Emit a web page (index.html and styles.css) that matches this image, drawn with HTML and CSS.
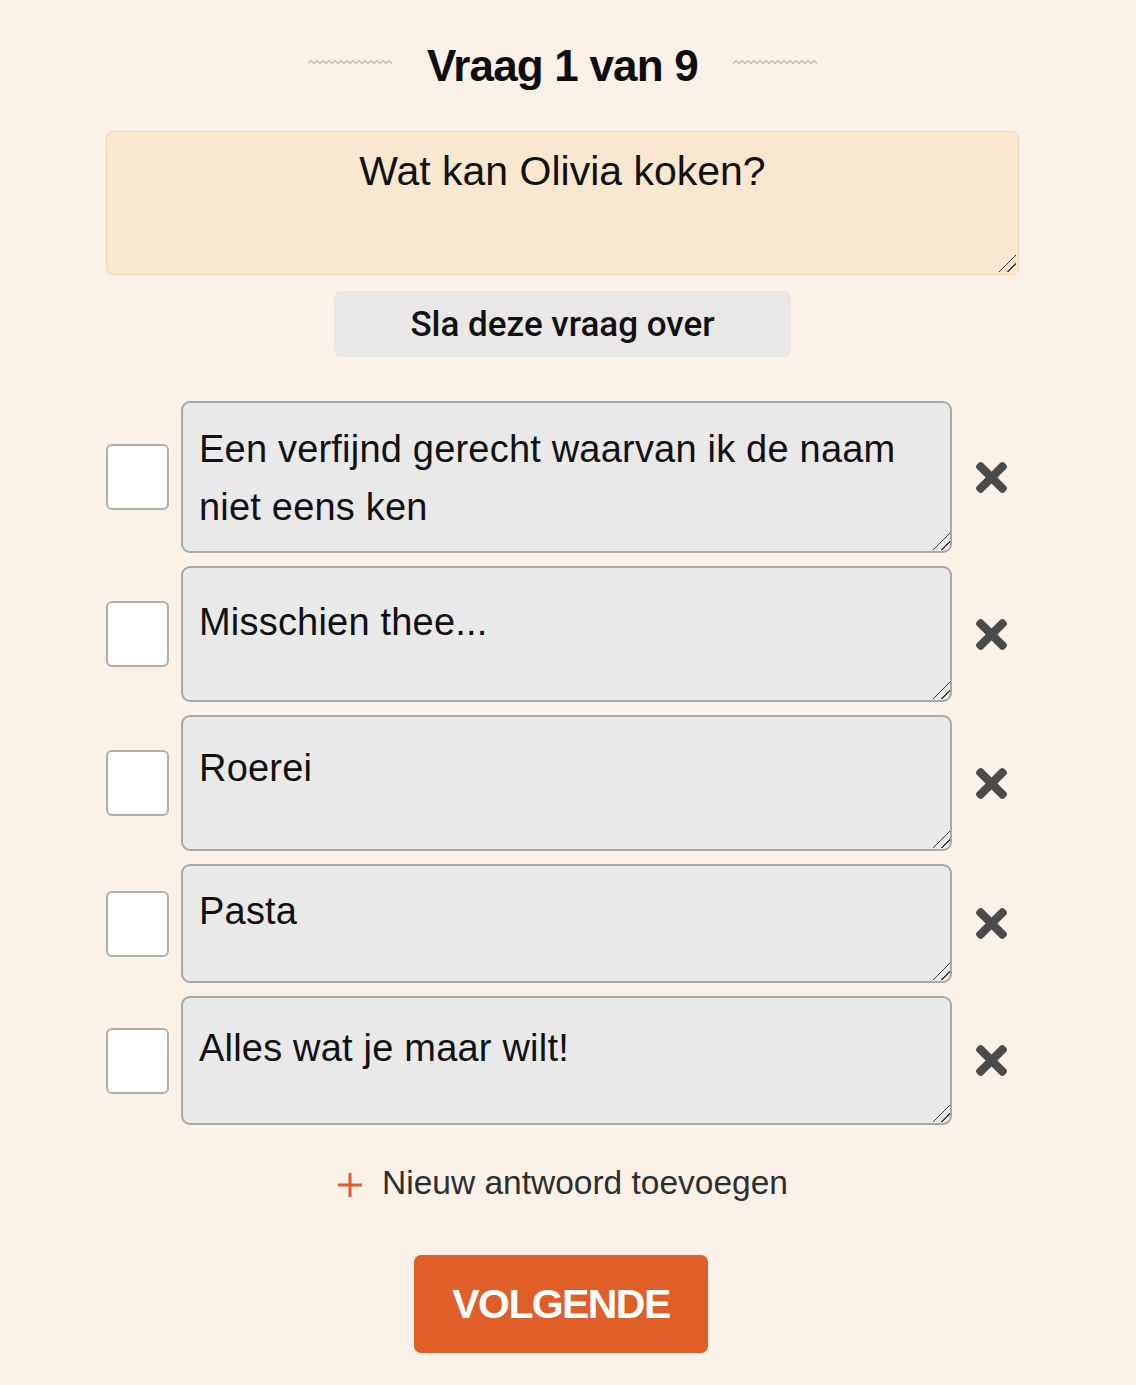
FILE: index.html
```html
<!DOCTYPE html>
<html lang="nl">
<head>
<meta charset="utf-8">
<title>Vraag 1 van 9</title>
<link rel="stylesheet" href="styles.css">
</head>
<body>
<main class="quiz">
  <header class="quiz-head">
    <svg class="wave" width="84" height="6" viewBox="0 0 84 6"><polyline points="0,4.5 3,1.5 6,4.5 9,1.5 12,4.5 15,1.5 18,4.5 21,1.5 24,4.5 27,1.5 30,4.5 33,1.5 36,4.5 39,1.5 42,4.5 45,1.5 48,4.5 51,1.5 54,4.5 57,1.5 60,4.5 63,1.5 66,4.5 69,1.5 72,4.5 75,1.5 78,4.5 81,1.5 84,4.5" /></svg>
    <h1 class="quiz-title">Vraag 1 van 9</h1>
    <svg class="wave" width="84" height="6" viewBox="0 0 84 6"><polyline points="0,4.5 3,1.5 6,4.5 9,1.5 12,4.5 15,1.5 18,4.5 21,1.5 24,4.5 27,1.5 30,4.5 33,1.5 36,4.5 39,1.5 42,4.5 45,1.5 48,4.5 51,1.5 54,4.5 57,1.5 60,4.5 63,1.5 66,4.5 69,1.5 72,4.5 75,1.5 78,4.5 81,1.5 84,4.5" /></svg>
  </header>

  <div class="field question-field">
    <textarea class="question">Wat kan Olivia koken?</textarea>
  </div>

  <div class="skip-wrap">
    <button class="skip">Sla deze vraag over</button>
  </div>

  <div class="answers">
    <div class="answer">
      <input type="checkbox" class="check">
      <div class="field"><textarea class="answer-text r1">Een verfijnd gerecht waarvan ik de naam niet eens ken</textarea></div>
      <button class="remove" aria-label="Verwijderen"><svg viewBox="0 80 352 352" width="31" height="31"><path d="M242.72 256l100.07-100.07c12.28-12.28 12.28-32.190 0-44.48l-22.24-22.24c-12.28-12.28-32.19-12.28-44.48 0L176 189.28 75.93 89.21c-12.28-12.28-32.19-12.28-44.48 0L9.21 111.45c-12.28 12.28-12.28 32.19 0 44.48L109.28 256 9.21 356.07c-12.28 12.28-12.28 32.19 0 44.48l22.24 22.24c12.28 12.28 32.2 12.28 44.48 0L176 322.72l100.07 100.07c12.28 12.28 32.2 12.28 44.48 0l22.24-22.24c12.28-12.28 12.28-32.19 0-44.48L242.72 256z"/></svg></button>
    </div>
    <div class="answer">
      <input type="checkbox" class="check">
      <div class="field"><textarea class="answer-text r2">Misschien thee...</textarea></div>
      <button class="remove" aria-label="Verwijderen"><svg viewBox="0 80 352 352" width="31" height="31"><path d="M242.72 256l100.07-100.07c12.28-12.28 12.28-32.190 0-44.48l-22.24-22.24c-12.28-12.28-32.19-12.28-44.48 0L176 189.28 75.93 89.21c-12.28-12.28-32.19-12.28-44.48 0L9.21 111.45c-12.28 12.28-12.28 32.19 0 44.48L109.28 256 9.21 356.07c-12.28 12.28-12.28 32.19 0 44.48l22.24 22.24c12.28 12.28 32.2 12.28 44.48 0L176 322.72l100.07 100.07c12.28 12.28 32.2 12.28 44.48 0l22.24-22.24c12.28-12.28 12.28-32.19 0-44.48L242.72 256z"/></svg></button>
    </div>
    <div class="answer">
      <input type="checkbox" class="check">
      <div class="field"><textarea class="answer-text r3">Roerei</textarea></div>
      <button class="remove" aria-label="Verwijderen"><svg viewBox="0 80 352 352" width="31" height="31"><path d="M242.72 256l100.07-100.07c12.28-12.28 12.28-32.190 0-44.48l-22.24-22.24c-12.28-12.28-32.19-12.28-44.48 0L176 189.28 75.93 89.21c-12.28-12.28-32.19-12.28-44.48 0L9.21 111.45c-12.28 12.28-12.28 32.19 0 44.48L109.28 256 9.21 356.07c-12.28 12.28-12.28 32.19 0 44.48l22.24 22.24c12.28 12.28 32.2 12.28 44.48 0L176 322.72l100.07 100.07c12.28 12.28 32.2 12.28 44.48 0l22.24-22.24c12.28-12.28 12.28-32.19 0-44.48L242.72 256z"/></svg></button>
    </div>
    <div class="answer">
      <input type="checkbox" class="check">
      <div class="field"><textarea class="answer-text r4">Pasta</textarea></div>
      <button class="remove" aria-label="Verwijderen"><svg viewBox="0 80 352 352" width="31" height="31"><path d="M242.72 256l100.07-100.07c12.28-12.28 12.28-32.190 0-44.48l-22.24-22.24c-12.28-12.28-32.19-12.28-44.48 0L176 189.28 75.93 89.21c-12.28-12.28-32.19-12.28-44.48 0L9.21 111.45c-12.28 12.28-12.28 32.19 0 44.48L109.28 256 9.21 356.07c-12.28 12.28-12.28 32.19 0 44.48l22.24 22.24c12.28 12.28 32.2 12.28 44.48 0L176 322.72l100.07 100.07c12.28 12.28 32.2 12.28 44.48 0l22.24-22.24c12.28-12.28 12.28-32.19 0-44.48L242.72 256z"/></svg></button>
    </div>
    <div class="answer">
      <input type="checkbox" class="check">
      <div class="field"><textarea class="answer-text r5">Alles wat je maar wilt!</textarea></div>
      <button class="remove" aria-label="Verwijderen"><svg viewBox="0 80 352 352" width="31" height="31"><path d="M242.72 256l100.07-100.07c12.28-12.28 12.28-32.190 0-44.48l-22.24-22.24c-12.28-12.28-32.19-12.28-44.48 0L176 189.28 75.93 89.21c-12.28-12.28-32.19-12.28-44.48 0L9.21 111.45c-12.28 12.28-12.28 32.19 0 44.48L109.28 256 9.21 356.07c-12.28 12.28-12.28 32.19 0 44.48l22.24 22.24c12.28 12.28 32.2 12.28 44.48 0L176 322.72l100.07 100.07c12.28 12.28 32.2 12.28 44.48 0l22.24-22.24c12.28-12.28 12.28-32.19 0-44.48L242.72 256z"/></svg></button>
    </div>
  </div>

  <div class="add-wrap">
    <button class="add">
      <svg class="plus" width="26" height="26" viewBox="0 0 26 26"><path d="M13 1V25M1 13H25"/></svg>
      <span>Nieuw antwoord toevoegen</span>
    </button>
  </div>

  <div class="next-wrap">
    <button class="next">VOLGENDE</button>
  </div>
</main>
</body>
</html>
```

FILE: styles.css
```css
html, body {
  margin: 0;
  padding: 0;
  background: #faf2e8;
}

body {
  font-family: "Liberation Sans", Arial, sans-serif;
  color: #111;
}

.quiz {
  width: 913px;
  margin-left: 106px;
  padding-top: 40px;
  padding-bottom: 33px;
}

.quiz-head {
  display: flex;
  align-items: center;
  justify-content: center;
  gap: 35px;
  height: 52px;
}

.wave {
  display: block;
  margin-bottom: 8px;
}

.wave polyline {
  fill: none;
  stroke: #bdb6ae;
  stroke-width: 1.1;
}

.quiz-title {
  margin: 0;
  font-size: 44px;
  line-height: 52px;
  font-weight: 700;
  letter-spacing: -0.8px;
  color: #0e0e0e;
}

/* wrapper carrying the resize grip drawn over the field corner */
.field {
  position: relative;
}

.field::after {
  content: "";
  position: absolute;
  right: 2px;
  bottom: 3px;
  width: 17px;
  height: 17px;
  pointer-events: none;
  background: linear-gradient(135deg,
    transparent 0,
    transparent calc(50% - 0.7px),
    #3a3a3a calc(50% - 0.7px),
    #3a3a3a calc(50% + 0.7px),
    transparent calc(50% + 0.7px),
    transparent calc(75% - 0.7px),
    #3a3a3a calc(75% - 0.7px),
    #3a3a3a calc(75% + 0.7px),
    transparent calc(75% + 0.7px));
}

.question-field {
  margin-top: 39px;
}

.question-field::after {
  right: 3px;
  bottom: 3px;
}

.question {
  display: block;
  box-sizing: border-box;
  width: 100%;
  height: 144px;
  margin: 0;
  padding: 15px 20px 0;
  background: #f9e7d0;
  border: 1.5px solid #f1d6ae;
  border-radius: 7px;
  font-family: "Liberation Sans", Arial, sans-serif;
  font-size: 41px;
  line-height: 48px;
  text-align: center;
  color: #111;
  outline: none;
  resize: none;
}

.skip-wrap {
  display: flex;
  justify-content: center;
  margin-top: 16px;
}

.skip {
  width: 457px;
  height: 66px;
  border: none;
  border-radius: 7px;
  background: #e9e8e6;
  font-family: Roboto, "Liberation Sans", sans-serif;
  font-size: 35px;
  font-weight: 500;
  color: #111;
  padding: 0;
}

.answers {
  display: flex;
  flex-direction: column;
  gap: 13px;
  margin-top: 44px;
}

.answer {
  display: grid;
  grid-template-columns: 63px 771px 1fr;
  column-gap: 12px;
  align-items: center;
}

.check {
  appearance: none;
  -webkit-appearance: none;
  margin: 0;
  width: 63px;
  height: 66px;
  box-sizing: border-box;
  background: #fff;
  border: 2px solid #b0aeab;
  border-radius: 6px;
}

.answer-text {
  display: block;
  box-sizing: border-box;
  width: 100%;
  margin: 0;
  padding: 16px 16px 0;
  background: #e9e9e9;
  border: 2px solid #a8a8a8;
  border-radius: 9px;
  font-family: "Liberation Sans", Arial, sans-serif;
  font-size: 38px;
  line-height: 58px;
  letter-spacing: 0.2px;
  color: #111;
  outline: none;
  overflow: hidden;
  resize: none;
}

.r1 { height: 152px; padding-top: 17px; }
.r2 { height: 136px; padding-top: 25px; }
.r3 { height: 136px; padding-top: 22px; }
.r4 { height: 119px; padding-top: 16px; }
.r5 { height: 129px; padding-top: 21px; }

.remove {
  justify-self: center;
  display: flex;
  align-items: center;
  justify-content: center;
  padding: 0;
  margin: 0;
  border: none;
  background: none;
  width: 31px;
  height: 31px;
}

.remove svg {
  display: block;
  fill: #4b4b4b;
}

.add-wrap {
  display: flex;
  justify-content: center;
  margin-top: 38px;
}

.add {
  display: flex;
  align-items: center;
  gap: 19px;
  padding: 0;
  border: none;
  background: none;
  font-family: "Liberation Sans", Arial, sans-serif;
  font-size: 33.5px;
  line-height: 40px;
  color: #2e2e2e;
}

.plus {
  display: block;
  margin-top: 4px;
}

.plus path {
  stroke: #e0602a;
  stroke-width: 3;
  fill: none;
}

.next-wrap {
  display: flex;
  justify-content: center;
  margin-top: 52px;
}

.next {
  width: 294px;
  height: 98px;
  margin-right: 3px;
  border: none;
  border-radius: 7px;
  background: #e05e27;
  color: #fff;
  font-family: "Liberation Sans", Arial, sans-serif;
  font-size: 41px;
  font-weight: 700;
  letter-spacing: -1.6px;
  padding: 0;
}
```
